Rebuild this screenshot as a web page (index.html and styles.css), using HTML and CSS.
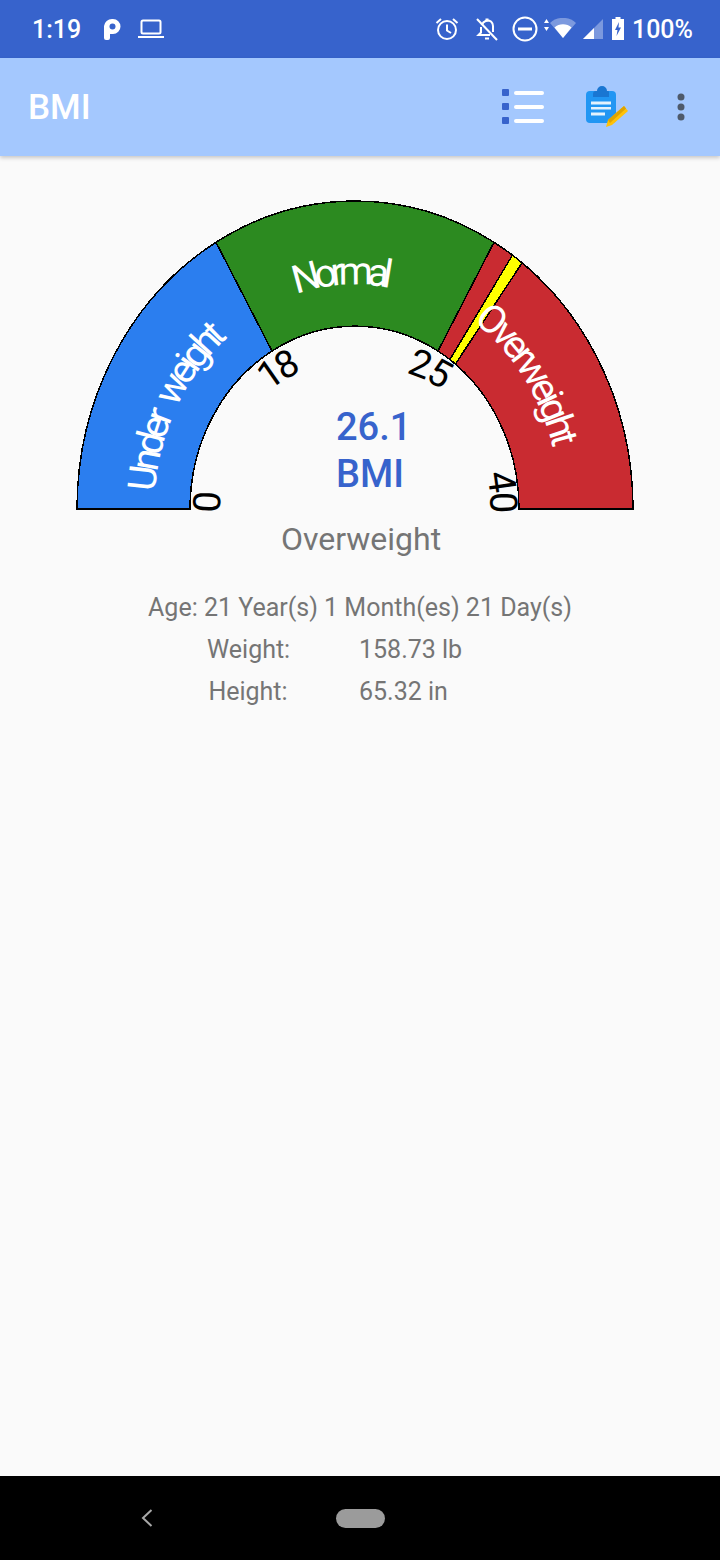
FILE: index.html
```html
<!DOCTYPE html>
<html lang="en">
<head>
  <meta charset="UTF-8">
  <title>BMI</title>
  <link rel="stylesheet" href="styles.css">
</head>
<body>
  <div class="status-bar">
    <div class="status-left">
      <span class="clock">1:19</span>
      <svg class="icon p-icon" width="18" height="22" viewBox="0 0 18 22"><path d="M1 8a8 8 0 0 1 8-7h1a7 7 0 0 1 0 15H7v4a2 2 0 0 1-2 2H3a2 2 0 0 1-2-2z" fill="#fff"/><circle cx="9.500" cy="8.500" r="3" fill="#3763cc"/></svg>
      <svg class="icon laptop-icon" width="26" height="20" viewBox="0 0 26 20"><rect x="3.500" y="1.500" width="19" height="13" rx="1.500" fill="none" stroke="#fff" stroke-width="2"/><rect x="0" y="17" width="26" height="2" fill="#fff"/></svg>
    </div>
    <div class="status-right">
      <svg class="icon" width="24" height="24" viewBox="0 0 24 24"><circle cx="12" cy="13" r="9" fill="none" stroke="#fff" stroke-width="2"/><path d="M12 7.500V13.500L16 16M1.500 6 6 2M22.500 6 18 2" fill="none" stroke="#fff" stroke-width="2"/></svg>
      <svg class="icon bell" width="24" height="24" viewBox="0 0 24 24"><path d="M7 8a6 6 0 0 1 9-3.500 6 6 0 0 1 2 4.500v6M15 18H3.500L6 15.500V10" fill="none" stroke="#fff" stroke-width="2"/><path d="M10 20.500h4v2h-4zM10.500 1.500h3v3h-3z" fill="#fff"/><path d="M2 2l20 21" stroke="#fff" stroke-width="2"/></svg>
      <svg class="icon dnd" width="26" height="26" viewBox="0 0 26 26"><circle cx="13" cy="13" r="11.500" fill="none" stroke="#fff" stroke-width="2"/><rect x="6" y="11.500" width="14" height="3" fill="#fff"/></svg>
      <svg class="icon arrows" width="5" height="12" viewBox="0 0 5 12"><path d="M2.500 0 5 4H0zM2.500 12 0 8h5z" fill="#fff"/></svg>
      <svg class="icon wifi" width="26" height="20" viewBox="0 0 26 20"><path d="M0 5a19 19 0 0 1 26 0L13 20z" fill="#fff" fill-opacity=".35"/><path d="M4.500 9.500a13 13 0 0 1 17 0L13 20z" fill="#fff"/></svg>
      <svg class="icon signal" width="20" height="20" viewBox="0 0 20 20"><path d="M20 0V20H0z" fill="#fff" fill-opacity=".35"/><path d="M11 9V20H0z" fill="#fff"/></svg>
      <svg class="icon battery" width="12" height="23" viewBox="0 0 12 23"><path d="M3.500 0h5v2H12v21H0V2h3.500z" fill="#fff"/><path d="M7 5 3 13h2.500L4.500 19 9 10.500H6.500z" fill="#3763cc"/></svg>
      <span class="percent">100%</span>
    </div>
  </div>

  <header class="app-bar">
    <h1 class="app-title">BMI</h1>
    <div class="app-actions">
      <svg class="list-icon" width="42" height="35" viewBox="0 0 42 35">
        <rect x="0" y="0" width="7" height="7" rx="1" fill="#3763cc"/>
        <rect x="0" y="14" width="7" height="7" rx="1" fill="#3763cc"/>
        <rect x="0" y="28" width="7" height="7" rx="1" fill="#3763cc"/>
        <rect x="12" y="2" width="30" height="4" rx="2" fill="#fff"/>
        <rect x="12" y="16" width="30" height="4" rx="2" fill="#fff"/>
        <rect x="12" y="30" width="30" height="4" rx="2" fill="#fff"/>
      </svg>
      <svg class="note-icon" width="42" height="42" viewBox="0 0 42 42">
        <rect x="0" y="5" width="30" height="32" rx="4" fill="#2196f3"/>
        <path d="M7 11V8a3 3 0 0 1 3-3h1a5 5 0 0 1 10 0h1a1 1 0 0 1 1 1v5z" fill="#1976d2"/>
        <rect x="5" y="15.500" width="20" height="3" fill="#e3f2fd"/>
        <rect x="5" y="21" width="20" height="2.500" fill="#e3f2fd"/>
        <rect x="5" y="26.500" width="14" height="3" fill="#e3f2fd"/>
        <path d="M20 41l2-7L38 20l4 5L26 39z" fill="#ffc107"/>
        <path d="M22 34 38 20l2 2.500L24 37z" fill="#dea300"/>
      </svg>
      <svg class="more-icon" width="8" height="28" viewBox="0 0 8 28">
        <circle cx="4" cy="4" r="3.500" fill="#4e5a6b"/>
        <circle cx="4" cy="14" r="3.500" fill="#4e5a6b"/>
        <circle cx="4" cy="24" r="3.500" fill="#4e5a6b"/>
      </svg>
    </div>
  </header>

  <main class="content">
    <svg class="gauge" width="720" height="366" viewBox="0 156 720 366">
      <defs>
        <path id="arc-under" d="M155 492 A200 222 0 0 1 250 320"/>
        <path id="arc-normal" d="M296 294 A200 222 0 0 1 420 297"/>
        <path id="arc-over" d="M473 321 A205 228 0 0 1 560 509"/>
        <path id="arc-0" d="M220 513 A135 149 0 0 1 225 470"/>
        <path id="arc-18" d="M269 391 A135 149 0 0 1 320 366"/>
        <path id="arc-25" d="M406 373 A135 149 0 0 1 465 409"/>
        <path id="arc-40" d="M487 473 A135 149 0 0 1 490 516"/>
      </defs>

      <path class="band band-blue" d="M77 509 A278 308 0 0 1 216 242.300 L272 351 A165 183 0 0 0 190 509 Z"/>
      <path class="band band-green" d="M216 242.300 A278 308 0 0 1 494 242.300 L438 351 A165 183 0 0 0 272 351 Z"/>
      <path class="band band-red" d="M494 242.300 A278 308 0 0 1 633 509 L519 509 A165 183 0 0 0 438 351 Z"/>
      <path class="band needle" d="M512.500 255 L522 263 L455.500 364 L450 359.400 Z"/>

      <text class="band-label label-under"><textPath href="#arc-under">Under weight</textPath></text>
      <text class="band-label label-normal"><textPath href="#arc-normal">Normal</textPath></text>
      <text class="band-label label-over"><textPath href="#arc-over">Overweight</textPath></text>

      <text class="tick"><textPath href="#arc-0">0</textPath></text>
      <text class="tick tick-18"><textPath href="#arc-18">18</textPath></text>
      <text class="tick"><textPath href="#arc-25">25</textPath></text>
      <text class="tick"><textPath href="#arc-40">40</textPath></text>

      <text class="value" x="336" y="440">26.1</text>
      <text class="value" x="336" y="487">BMI</text>
    </svg>

    <div class="result">Overweight</div>

    <div class="details">
      <div class="age">Age: 21 Year(s) 1 Month(es) 21 Day(s)</div>
      <div class="row"><span class="row-label">Weight:</span><span>158.73 lb</span></div>
      <div class="row"><span class="row-label">Height:</span><span>65.32 in</span></div>
    </div>
  </main>

  <nav class="nav-bar">
    <svg class="nav-back" width="12" height="18" viewBox="0 0 12 18"><path d="M10.500 1 2 9l8.500 8" fill="none" stroke="#a8a8a8" stroke-width="2"/></svg>
    <div class="nav-home"></div>
  </nav>
</body>
</html>
```

FILE: styles.css
```css
* {
  box-sizing: border-box;
}

body {
  margin: 0;
  width: 720px;
  height: 1560px;
  display: flex;
  flex-direction: column;
  background: #fafafa;
  font-family: Roboto, "Noto Sans", sans-serif;
  overflow: hidden;
}

.icon {
  display: block;
  flex: none;
}

.status-bar {
  height: 58px;
  flex: none;
  display: flex;
  justify-content: space-between;
  align-items: center;
  padding: 0 27px 0 32px;
  background: #3763cc;
  color: white;
  font-size: 25px;
  font-weight: 500;
}

.status-left {
  display: flex;
  align-items: center;
}

.clock {
  width: 71px;
}

.laptop-icon {
  margin-left: 17px;
}

.status-right {
  display: flex;
  align-items: center;
}

.bell {
  margin-left: 16px;
}

.dnd {
  margin-left: 13px;
}

.arrows {
  margin: -8px 0 0 6px;
}

.wifi {
  margin: -2px 0 0 1px;
}

.signal {
  margin: 0 0 0 7px;
}

.battery {
  margin: -1px 0 0 9px;
}

.percent {
  margin-left: 8px;
}

.app-bar {
  height: 98px;
  flex: none;
  display: flex;
  justify-content: space-between;
  align-items: center;
  padding: 0 35px 0 28px;
  background: #a4c8fe;
  box-shadow: 0 2px 4px rgba(0, 0, 0, 0.2);
  position: relative;
}

.app-title {
  margin: 0;
  font-size: 35px;
  font-weight: 500;
  color: white;
}

.app-actions {
  display: flex;
  align-items: center;
}

.list-icon {
  margin-bottom: 1px;
}

.note-icon {
  margin-left: 42px;
}

.more-icon {
  margin-left: 49px;
}

.content {
  flex: 1;
  display: flex;
  flex-direction: column;
}

.gauge {
  display: block;
  flex: none;
}

.band {
  stroke: black;
  stroke-width: 1.500;
  shape-rendering: crispEdges;
}

.band-blue {
  fill: #2b7eef;
}

.band-green {
  fill: #2c8a20;
}

.band-red {
  fill: #c92b31;
}

.needle {
  fill: #ffff00;
}

.band-label {
  fill: white;
  font-size: 39px;
  letter-spacing: -5.500px;
}

.label-under {
  word-spacing: 8px;
}

.label-normal {
  letter-spacing: -6.500px;
}

.label-over {
  letter-spacing: -4.700px;
}

.tick {
  fill: black;
  font-size: 38px;
  letter-spacing: -2px;
}

.tick-18 {
  letter-spacing: -4px;
}

.value {
  fill: #3763cc;
  font-size: 38px;
  font-weight: 500;
}

.result {
  height: 34px;
  line-height: 34px;
  text-align: center;
  font-size: 32px;
  color: #757575;
  padding-left: 2px;
}

.details {
  margin-top: 31px;
  font-size: 25px;
  color: #757575;
}

.age {
  height: 42px;
  line-height: 42px;
  text-align: center;
}

.row {
  height: 42px;
  line-height: 42px;
  display: grid;
  grid-template-columns: 359px 1fr;
}

.row-label {
  width: 82px;
  margin-left: 207px;
  text-align: center;
}

.nav-bar {
  height: 84px;
  flex: none;
  background: black;
  display: flex;
  align-items: center;
  padding-left: 141px;
}

.nav-home {
  width: 49px;
  height: 19px;
  margin-left: 183px;
  border-radius: 10px;
  background: #9b9b9b;
}
```
